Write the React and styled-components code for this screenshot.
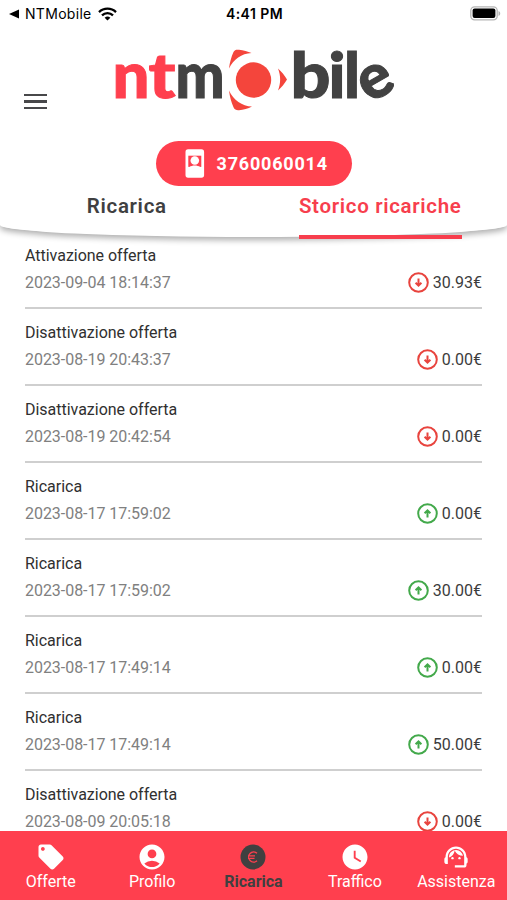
import React, { useState } from 'react';
import styled, { createGlobalStyle } from 'styled-components';
import {
  MdLocalOffer,
  MdAccountCircle,
  MdWatchLater,
  MdSupportAgent,
} from 'react-icons/md';

const GlobalStyle = createGlobalStyle`
  * {
    box-sizing: border-box;
  }

  body {
    margin: 0;
    background: #fff;
    font-family: Roboto, "Liberation Sans", sans-serif;
  }

  button {
    border: 0;
    padding: 0;
    background: none;
    font: inherit;
    color: inherit;
    cursor: pointer;
  }

  svg {
    display: block;
  }
`;

const Screen = styled.div`
  display: flex;
  flex-direction: column;
  width: 100%;
  height: 900px;
  overflow: hidden;
`;

const Header = styled.header`
  position: relative;
  z-index: 1;
  flex: none;
  height: 237px;
  background: #fff;
  border-radius: 0 0 50% 50% / 0 0 12px 12px;
  box-shadow: 0 3px 6px rgba(0, 0, 0, 0.33);
`;

const StatusBar = styled.div`
  display: grid;
  grid-template-columns: 1fr auto 1fr;
  align-items: center;
  height: 27px;
  padding: 0 6px 0 9px;
  font-family: Inter, sans-serif;
  color: #000;
`;

const BackToApp = styled.div`
  display: flex;
  align-items: center;
  font-size: 14px;
  letter-spacing: 0.3px;

  span {
    margin: 0 6px 0 6px;
  }
`;

const Clock = styled.div`
  padding-right: 1px;
  font-size: 14px;
  font-weight: 600;
  letter-spacing: 0.45px;
`;

const Battery = styled.div`
  justify-self: end;
`;

const Brand = styled.div`
  display: flex;
  height: 114px;
  padding-left: 24px;
`;

const MenuButton = styled.button`
  display: flex;
  flex-direction: column;
  gap: 4px;
  width: 23px;
  height: 15px;
  margin-top: 67px;

  i {
    width: 23px;
    height: 2.4px;
    background: #48484a;
  }
`;

const Logo = styled.svg`
  margin: 1px 0 0 63px;
  font-family: Lato, sans-serif;
  font-weight: 900;
  font-size: 62px;
  stroke-width: 1;
`;

const PhoneButton = styled.button`
  display: flex;
  align-items: center;
  gap: 12px;
  width: 196px;
  height: 45px;
  margin: 0 auto;
  padding-left: 29px;
  border-radius: 23px;
  background: #ff3f4e;
  color: #fff;
  font-size: 18px;
  font-weight: 700;
  letter-spacing: 0.8px;
`;

const Tabs = styled.nav`
  display: grid;
  grid-template-columns: 1fr 1fr;
  justify-items: center;
  height: 53px;
`;

const Tab = styled.button`
  display: flex;
  height: 53px;
  border-bottom: 4.5px solid ${({ $active }) => ($active ? '#f73e4d' : 'transparent')};
  color: ${({ $active }) => ($active ? '#f73e4d' : '#3f3f41')};
  font-size: 20.5px;
  font-weight: 600;
  letter-spacing: 0.68px;
  line-height: 40px;
  white-space: nowrap;
`;

const History = styled.ul`
  flex: 1;
  min-height: 0;
  overflow: hidden;
  margin: 0;
  padding: 0 25px;
  list-style: none;
`;

const Row = styled.li`
  height: 77px;
  padding-top: 10px;
  border-bottom: 2px solid #cfcfcf;
  font-size: 16px;

  &:first-child {
    height: 72px;
    padding-top: 5px;
  }
`;

const Title = styled.div`
  height: 27px;
  line-height: 27px;
  letter-spacing: -0.02px;
  color: #303030;
`;

const Detail = styled.div`
  display: flex;
  align-items: center;
  justify-content: space-between;
  height: 27px;
`;

const DateText = styled.time`
  letter-spacing: -0.04px;
  color: #808080;
`;

const Amount = styled.div`
  display: flex;
  align-items: center;
  gap: 4px;
  color: #3c3c3c;
`;

const BottomBar = styled.nav`
  display: grid;
  grid-template-columns: repeat(5, 1fr);
  flex: none;
  height: 69px;
  background: #ff3f4e;
`;

const BarItem = styled.button`
  display: grid;
  grid-template-rows: 29px 19px;
  align-content: start;
  align-items: center;
  justify-items: center;
  row-gap: 1px;
  padding-top: 11px;
  color: ${({ $active }) => ($active ? '#404040' : '#fff')};
  font-size: 16px;
  font-weight: ${({ $active }) => ($active ? 700 : 400)};
  line-height: 19px;
`;

const WifiIcon = () => (
  <svg width="19" height="14" viewBox="0 0 19 14" fill="none" stroke="#000" strokeWidth="2.3">
    <path d="M1 5.1a12.2 12.2 0 0 1 17 0" />
    <path d="M4 8.4a7.8 7.8 0 0 1 11 0" />
    <path d="M9.5 13.6 6.6 10.8a4.2 4.2 0 0 1 5.8 0z" fill="#000" stroke="none" />
  </svg>
);

const BatteryIcon = () => (
  <svg width="31" height="15" viewBox="0 0 31 15">
    <rect x="0.8" y="0.8" width="26.4" height="13" rx="3.8" fill="#fff" stroke="#b5b5b5" strokeWidth="1.3" />
    <rect x="2.6" y="2.6" width="22.8" height="9.4" rx="2" fill="#000" />
    <path d="M28.5 5v5c2.3-1 2.3-4 0-5z" fill="#b5b5b5" />
  </svg>
);

const NtLogo = () => (
  <Logo width="284" height="96" viewBox="110 28 284 96" aria-label="ntmobile">
    <g fill="#ff3f4e" stroke="#ff3f4e">
      <text x="112.5" y="97.5" textLength="37" lengthAdjust="spacingAndGlyphs">n</text>
      <text x="148.5" y="97.5" textLength="27" lengthAdjust="spacingAndGlyphs">t</text>
    </g>
    <g fill="#424242" stroke="#424242">
      <text x="175.5" y="97.5" textLength="49" lengthAdjust="spacingAndGlyphs">m</text>
      <text x="290.5" y="97.5" textLength="40" lengthAdjust="spacingAndGlyphs">b</text>
      <text x="328.5" y="97.5" textLength="17" lengthAdjust="spacingAndGlyphs">i</text>
      <text x="344" y="97.5" textLength="16" lengthAdjust="spacingAndGlyphs">l</text>
      {/* the last letter is tilted, its bar runs diagonally */}
      <text x="359" y="97.5" textLength="33" lengthAdjust="spacingAndGlyphs" transform="rotate(-30 376 81)">e</text>
    </g>
    <g fill="#f4453c">
      <circle cx="253.5" cy="80" r="17.7" />
      <path d="M229 68.5c.8-6 2.2-11.5 4.5-16.5 1.2-2.3 3-2.5 5.5-2.2 4.5.5 8.800 1.600 12.500 3.300-10 .4-18 6.400-22.500 15.400z" />
      <path d="M229 90.5c.8 6 2.2 11.5 4.5 16.8 1.2 2.6 3 3.1 5.5 2.9 4.5-.4 9-1.500 13-3.700-10-.2-18.500-6.500-23-16z" />
      <path d="M278 68.5c3.5 3 6.5 6.8 9 11-2.5 4.3-5.5 8-9 11 2.9-7 2.9-15 0-22z" />
    </g>
  </Logo>
);

const SimIcon = () => (
  <svg width="20" height="29" viewBox="0 0 20 29">
    <rect x="0.5" y="0.3" width="18.6" height="28.4" rx="2.6" fill="#fff" />
    <path d="M3.3 6.7h13v11.2h-13z" fill="#ff3f4e" />
    <circle cx="9.8" cy="11.5" r="4.3" fill="#fff" />
    <path d="M4.5 17.9c2.5-2 8-2 10.6 0z" fill="#fff" />
  </svg>
);

const ArrowIcon = ({ up }) => (
  <svg width="21" height="21" viewBox="0 0 21 21" fill="none" stroke={up ? '#43a94b' : '#e8443e'} strokeWidth="2">
    <circle cx="10.5" cy="10.5" r="9.3" />
    <path
      d="M10.5 6.5v7M7.6 10.8l2.9 2.9 2.9-2.9"
      transform={up ? 'rotate(180 10.5 10.5)' : undefined}
    />
  </svg>
);

const EuroIcon = () => (
  <svg width="28" height="28" viewBox="0 0 28 28">
    <circle cx="14" cy="14" r="12.5" fill="#404040" />
    <path
      d="M18 10.3a5 5 0 1 0 0 7.4M9 12.8h7M9 15.3h6.5"
      fill="none"
      stroke="#ff3f4e"
      strokeWidth="1.3"
    />
  </svg>
);

const movements = [
  { title: 'Attivazione offerta', date: '2023-09-04 18:14:37', amount: '30.93€' },
  { title: 'Disattivazione offerta', date: '2023-08-19 20:43:37', amount: '0.00€' },
  { title: 'Disattivazione offerta', date: '2023-08-19 20:42:54', amount: '0.00€' },
  { title: 'Ricarica', date: '2023-08-17 17:59:02', amount: '0.00€', up: true },
  { title: 'Ricarica', date: '2023-08-17 17:59:02', amount: '30.00€', up: true },
  { title: 'Ricarica', date: '2023-08-17 17:49:14', amount: '0.00€', up: true },
  { title: 'Ricarica', date: '2023-08-17 17:49:14', amount: '50.00€', up: true },
  { title: 'Disattivazione offerta', date: '2023-08-09 20:05:18', amount: '0.00€' },
];

const sections = [
  { label: 'Offerte', icon: <MdLocalOffer size={30} /> },
  { label: 'Profilo', icon: <MdAccountCircle size={30} /> },
  { label: 'Ricarica', icon: <EuroIcon /> },
  { label: 'Traffico', icon: <MdWatchLater size={30} /> },
  { label: 'Assistenza', icon: <MdSupportAgent size={28} /> },
];

const tabs = ['Ricarica', 'Storico ricariche'];

const App = () => {
  const [tab, setTab] = useState('Storico ricariche');
  const [section, setSection] = useState('Ricarica');

  return (
    <Screen>
      <GlobalStyle />
      <Header>
        <StatusBar>
          <BackToApp>
            <svg width="10" height="10" viewBox="0 0 10 10"><path d="M0 5 10 .5v9z" /></svg>
            <span>NTMobile</span>
            <WifiIcon />
          </BackToApp>
          <Clock>4:41 PM</Clock>
          <Battery><BatteryIcon /></Battery>
        </StatusBar>
        <Brand>
          <MenuButton aria-label="Menu"><i /><i /><i /></MenuButton>
          <NtLogo />
        </Brand>
        <PhoneButton>
          <SimIcon />
          3760060014
        </PhoneButton>
        <Tabs>
          {tabs.map((name) => (
            <Tab key={name} $active={tab === name} onClick={() => setTab(name)}>
              {name}
            </Tab>
          ))}
        </Tabs>
      </Header>

      <History>
        {movements.map((item, index) => (
          <Row key={index}>
            <Title>{item.title}</Title>
            <Detail>
              <DateText>{item.date}</DateText>
              <Amount>
                <ArrowIcon up={item.up} />
                {item.amount}
              </Amount>
            </Detail>
          </Row>
        ))}
      </History>

      <BottomBar>
        {sections.map(({ label, icon }) => (
          <BarItem key={label} $active={section === label} onClick={() => setSection(label)}>
            {icon}
            {label}
          </BarItem>
        ))}
      </BottomBar>
    </Screen>
  );
};

export default App;
